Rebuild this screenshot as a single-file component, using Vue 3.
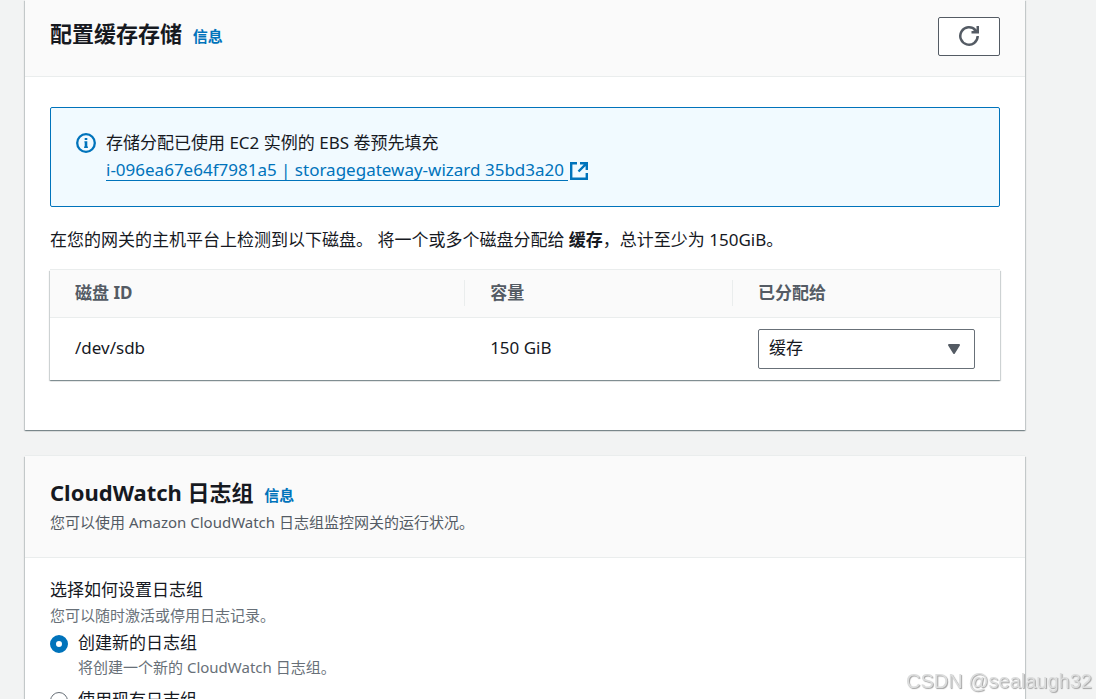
<script setup>
import { ref } from 'vue'

const disks = ref([{ id: '/dev/sdb', size: '150 GiB', use: '缓存' }])
const logGroup = ref('new')
</script>

<template>
  <main class="page">
    <section class="card">
      <header class="card-head storage-head">
        <h2>配置缓存存储 <a class="info" href="#">信息</a></h2>
        <button class="refresh" type="button" aria-label="刷新">
          <svg viewBox="0 0 20 20" width="20" height="20" fill="none" stroke="currentColor" stroke-width="2.5">
            <path d="M18.7 10A8.7 8.7 0 1 1 16.4 4.1L18 5.8" />
            <path d="M18.75 0V6.3H12.5M17.8 5.4L14.6 5.6" />
          </svg>
        </button>
      </header>
      <div class="card-body">
        <div class="alert">
          <svg class="alert-icon" viewBox="0 0 20 20" width="20" height="20" fill="none" stroke="currentColor" stroke-width="2.3">
            <circle cx="10" cy="10" r="8.8" />
            <path d="M8.4 8.2H11.3V13.6H11.9V15H8.1V13.6H8.7V9.6H8.4ZM8.7 5H11.3V7H8.7Z" fill="currentColor" stroke="none" />
          </svg>
          <div>
            <p>存储分配已使用 EC2 实例的 EBS 卷预先填充</p>
            <a class="volume" href="#"><span>i-096ea67e64f7981a5 | storagegateway-wizard 35bd3a20&nbsp;</span><svg viewBox="0 0 18 18" width="18" height="18" fill="none" stroke="currentColor" stroke-width="2.4">
              <path d="M7 1.2H1.2V16.8H16.8V11M10 1.2H16.8V8M16.3 1.7L8.5 9.5" />
            </svg></a>
          </div>
        </div>
        <p class="note">在您的网关的主机平台上检测到以下磁盘。 将一个或多个磁盘分配给 <b>缓存</b>，总计至少为 150GiB。</p>
        <table>
          <colgroup>
            <col class="col-id"><col class="col-size"><col>
          </colgroup>
          <thead>
            <tr>
              <th scope="col"><div>磁盘 ID</div></th>
              <th scope="col"><div>容量</div></th>
              <th scope="col"><div>已分配给</div></th>
            </tr>
          </thead>
          <tbody>
            <tr v-for="disk in disks" :key="disk.id">
              <td class="text">{{ disk.id }}</td>
              <td class="text">{{ disk.size }}</td>
              <td>
                <div class="select">
                  <select v-model="disk.use" aria-label="已分配给">
                    <option>缓存</option>
                  </select>
                  <svg viewBox="0 0 14 12" width="14" height="12">
                    <path d="M2 2H12L7 10Z" fill="currentColor" stroke="currentColor" stroke-width="2" stroke-linejoin="round" />
                  </svg>
                </div>
              </td>
            </tr>
          </tbody>
        </table>
      </div>
    </section>

    <section class="card">
      <header class="card-head">
        <div>
          <h2>CloudWatch 日志组 <a class="info" href="#">信息</a></h2>
          <p class="sub">您可以使用 Amazon CloudWatch 日志组监控网关的运行状况。</p>
        </div>
      </header>
      <fieldset>
        <legend>选择如何设置日志组</legend>
        <p class="hint">您可以随时激活或停用日志记录。</p>
        <label class="choice">
          <input v-model="logGroup" type="radio" name="log-group" value="new">
          <span>创建新的日志组<small>将创建一个新的 CloudWatch 日志组。</small></span>
        </label>
        <label class="choice">
          <input v-model="logGroup" type="radio" name="log-group" value="existing">
          <span>使用现有日志组</span>
        </label>
      </fieldset>
    </section>
    <div class="watermark">CSDN @sealaugh32</div>
  </main>
</template>

<style>
body {
  background: #f2f3f3;
}
html {
  overflow: hidden;
}
</style>

<style scoped>
.page {
  box-sizing: border-box;
  height: 100vh;
  overflow: hidden;
  padding: 0 71px 0 25px;
  color: #16191f;
  font: 17px/27px "Noto Sans", "Noto Sans CJK SC", sans-serif;
}
h2, p, fieldset, legend {
  margin: 0;
  padding: 0;
  border: 0;
}
.card {
  margin-bottom: 26px;
  background: #fff;
  box-shadow: 0 1px 1px rgba(0, 28, 36, 0.3), 1px 1px 1px rgba(0, 28, 36, 0.15), -1px 1px 1px rgba(0, 28, 36, 0.15), 0 -1px 0 #eaeded;
}
.card-head {
  box-sizing: border-box;
  display: flex;
  justify-content: space-between;
  align-items: flex-start;
  min-height: 102px;
  padding: 20px 25px;
  background: #fafafa;
  border-bottom: 1px solid #eaeded;
}
.storage-head {
  min-height: 77px;
  padding-top: 17px;
}
h2 {
  font-size: 22px;
  line-height: 32px;
  font-weight: 700;
}
.info {
  margin-left: 5px;
  color: #0073bb;
  font-size: 15px;
  text-decoration: none;
}
.refresh {
  display: flex;
  justify-content: center;
  align-items: center;
  width: 62px;
  height: 39px;
  padding: 0 0 2px;
  color: #545b64;
  background: #fff;
  border: 1px solid #545b64;
  border-radius: 2px;
}
.card-body {
  padding: 30px 25px 50px;
}
.alert {
  display: flex;
  gap: 10px;
  padding: 21px 25px 23px;
  background: #f1faff;
  border: 1px solid #0073bb;
  border-radius: 2px;
}
.alert-icon {
  flex: none;
  margin-top: 4px;
  color: #0073bb;
}
.volume {
  display: inline-flex;
  align-items: center;
  color: #0073bb;
  text-decoration: none;
}
.volume span {
  line-height: 20px;
  border-bottom: 1px solid #0073bb;
}
.volume svg {
  margin-left: 2px;
}
.note {
  margin: 19px 0 17px;
}
table {
  width: 100%;
  table-layout: fixed;
  border-collapse: collapse;
  box-shadow: 0 1px 1px rgba(0, 28, 36, 0.3), 1px 1px 1px rgba(0, 28, 36, 0.15), -1px 1px 1px rgba(0, 28, 36, 0.15), 0 -1px 0 #eaeded;
}
.col-id {
  width: 43.7%;
}
.col-size {
  width: 28.2%;
}
thead {
  background: #fafafa;
  border-bottom: 1px solid #eaeded;
}
th {
  padding: 10px 0 11px;
  color: #545b64;
  text-align: left;
}
th div {
  padding: 0 25px;
  line-height: 26px;
  border-right: 1px solid #eaeded;
}
th:last-child div {
  border-right: 0;
}
td {
  padding: 11px 25px;
}
td.text {
  padding-bottom: 15px;
}
.select {
  position: relative;
}
select {
  display: block;
  width: 100%;
  height: 40px;
  padding: 0 10px 4px;
  appearance: none;
  color: inherit;
  font: inherit;
  background: #fff;
  border: 1px solid #687078;
  border-radius: 2px;
}
.select svg {
  position: absolute;
  top: 14px;
  right: 14px;
  color: #545b64;
  pointer-events: none;
}
.sub, .hint, small {
  font-size: 15px;
  line-height: 24px;
}
.sub {
  color: #545b64;
  line-height: 22px;
}
.hint, small {
  color: #687078;
}
fieldset {
  padding: 18px 25px;
}
legend {
  float: left;
  width: 100%;
}
.hint {
  clear: both;
}
.choice {
  display: flex;
  gap: 10px;
  margin-top: 2px;
  margin-bottom: 8px;
}
.choice input {
  flex: none;
  box-sizing: border-box;
  width: 18px;
  height: 18px;
  margin: 6px 0 0;
  appearance: none;
  background: #fff;
  border: 1px solid #687078;
  border-radius: 50%;
}
.choice input:checked {
  border: 6px solid #0073bb;
}
small {
  display: block;
  line-height: 22px;
}
.watermark {
  position: fixed;
  right: 4px;
  bottom: 5px;
  color: #dcdddd;
  font: 20px/26px "Liberation Sans", Arial, sans-serif;
  text-shadow: 1px 1px 1px #a2a2a2;
}
</style>
